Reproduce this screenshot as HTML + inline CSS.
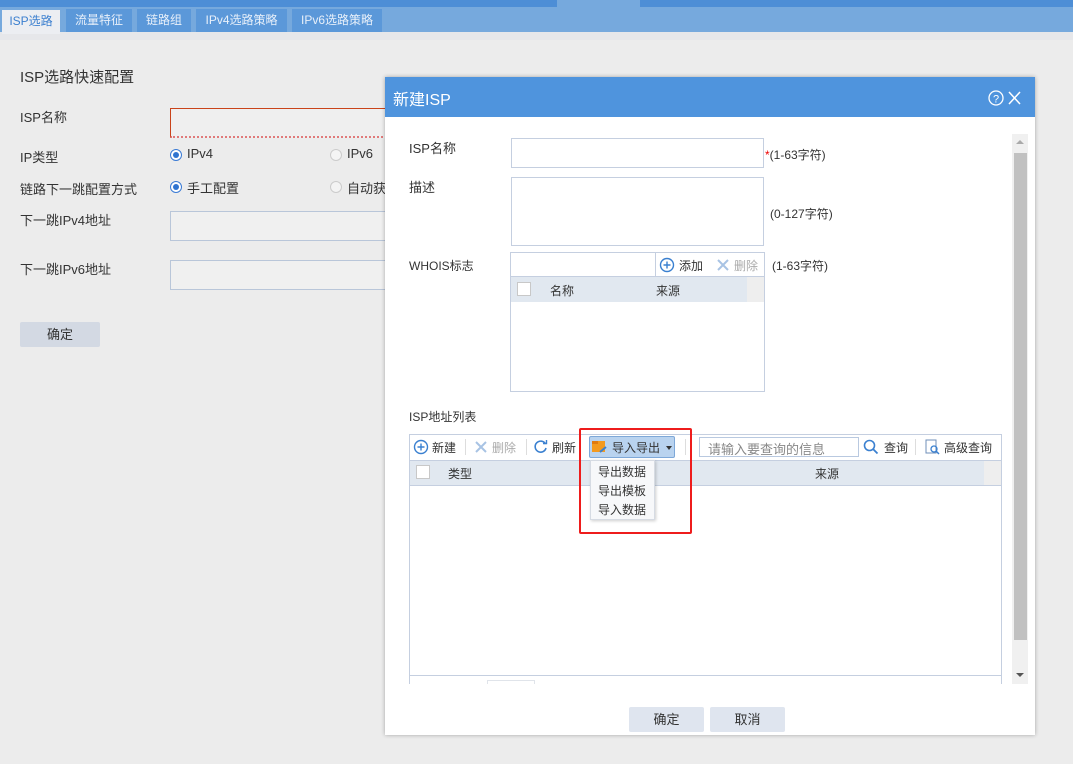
<!DOCTYPE html>
<html><head><meta charset="utf-8"><style>
*{margin:0;padding:0;box-sizing:border-box}
body{width:1073px;height:764px;overflow:hidden;background:#ececec;font-family:"Liberation Sans","Noto Sans CJK SC",sans-serif;font-size:13px;color:#333;position:relative}
.a{position:absolute}
.tab{position:absolute;top:9px;height:23px;line-height:22px;font-size:12px;color:#e8f0fa;text-align:center;background:#5b98d9}
.lbl{position:absolute;font-size:13px;color:#333}
.inp{position:absolute;border:1px solid #b9c6d9;background:#f0f0f0}
.radio{position:absolute;width:12px;height:12px;border-radius:50%;border:1px solid #ccc;background:#f4f4f4}
.radio.on{border:1px solid #3a7bd5;background:#fff}
.radio.on:after{content:"";position:absolute;left:2px;top:2px;width:6px;height:6px;border-radius:50%;background:#2f74d0}
.btn{position:absolute;background:#dfe5ef;border-radius:2px;text-align:center;font-size:13px;color:#333}
.cb{position:absolute;width:14px;height:14px;border:1px solid #c8c8c8;background:#fff}
</style></head><body>
<div class="a" style="left:0;top:0;width:1073px;height:7px;background:#4d8ed6"></div>
<div class="a" style="left:557px;top:0;width:83px;height:7px;background:#76a9dd"></div>
<div class="a" style="left:0;top:7px;width:1073px;height:25px;background:#76a9dd"></div>
<div class="a" style="left:0;top:32px;width:1073px;height:8px;background:#e6e7ea"></div>
<div class="tab" style="left:2px;width:58px;background:#eceef2;color:#3b7fcf;top:10px;height:24px">ISP选路</div>
<div class="tab" style="left:66px;width:66px">流量特征</div>
<div class="tab" style="left:137px;width:54px">链路组</div>
<div class="tab" style="left:196px;width:91px">IPv4选路策略</div>
<div class="tab" style="left:292px;width:90px">IPv6选路策略</div>

<div class="lbl" style="left:20px;top:66px;font-size:15px">ISP选路快速配置</div>
<div class="lbl" style="left:20px;top:107px">ISP名称</div>
<div class="a" style="left:170px;top:108px;width:220px;height:30px;border:1px solid #c9431a;border-bottom:2px dotted #e07a7a;background:#efefef"></div>
<div class="lbl" style="left:20px;top:147px">IP类型</div>
<div class="radio on" style="left:170px;top:149px"></div><div class="lbl" style="left:187px;top:146px">IPv4</div>
<div class="radio" style="left:330px;top:149px"></div><div class="lbl" style="left:347px;top:146px">IPv6</div>
<div class="lbl" style="left:20px;top:179px">链路下一跳配置方式</div>
<div class="radio on" style="left:170px;top:181px"></div><div class="lbl" style="left:187px;top:178px">手工配置</div>
<div class="radio" style="left:330px;top:181px"></div><div class="lbl" style="left:347px;top:178px">自动获</div>
<div class="lbl" style="left:20px;top:210px">下一跳IPv4地址</div>
<div class="inp" style="left:170px;top:211px;width:220px;height:30px"></div>
<div class="lbl" style="left:20px;top:259px">下一跳IPv6地址</div>
<div class="inp" style="left:170px;top:260px;width:220px;height:30px"></div>
<div class="btn" style="left:20px;top:322px;width:80px;height:25px;line-height:25px;background:#d3d9e3">确定</div>

<!-- dialog -->
<div class="a" style="left:385px;top:77px;width:650px;height:658px;background:#fff;box-shadow:0 0 4px rgba(0,0,0,.3)">
 <div class="a" style="left:0;top:0;width:650px;height:40px;background:#4f94dd"></div>
 <div class="a" style="left:8px;top:9px;color:#fff;font-size:16px">新建ISP</div>
 <svg class="a" style="left:603px;top:12px" width="40" height="18"><circle cx="8" cy="9" r="7" fill="none" stroke="#fff" stroke-width="1.3"/><text x="8" y="13.5" font-size="11" fill="#fff" text-anchor="middle" font-family="Liberation Sans">?</text><path d="M21 3L32 15M32 3L21 15" stroke="#fff" stroke-width="1.5"/></svg>

 <div class="lbl" style="left:24px;top:61px">ISP名称</div>
 <div class="a" style="left:126px;top:61px;width:253px;height:30px;border:1px solid #c5cfe0"></div>
 <div class="a" style="left:380px;top:69px;font-size:12px"><span style="color:#e00">*</span>(1-63字符)</div>
 <div class="lbl" style="left:24px;top:100px">描述</div>
 <div class="a" style="left:126px;top:100px;width:253px;height:69px;border:1px solid #c5cfe0"></div>
 <div class="a" style="left:385px;top:128px;font-size:12px">(0-127字符)</div>
 <div class="lbl" style="left:24px;top:180px;font-size:12px">WHOIS标志</div>
 <div class="a" style="left:125px;top:175px;width:255px;height:140px;border:1px solid #c5cfe0"></div>
 <div class="a" style="left:126px;top:176px;width:145px;height:23px;border-right:1px solid #c5cfe0"></div>
 <svg class="a" style="left:274px;top:180px" width="16" height="16"><circle cx="8" cy="8" r="6.5" fill="none" stroke="#3a80d0" stroke-width="1.4"/><path d="M8 4.5v7M4.5 8h7" stroke="#3a80d0" stroke-width="1.4"/></svg>
 <div class="a" style="left:294px;top:180px;font-size:12px">添加</div>
 <svg class="a" style="left:331px;top:181px" width="14" height="14"><path d="M2 2L12 12M12 2L2 12" stroke="#a8c3e4" stroke-width="2"/></svg>
 <div class="a" style="left:349px;top:180px;font-size:12px;color:#aaa">删除</div>
 <div class="a" style="left:387px;top:180px;font-size:12px">(1-63字符)</div>
 <div class="a" style="left:126px;top:199px;width:236px;height:26px;background:#e1e8f0;border-top:1px solid #c5cfe0"></div>
 <div class="a" style="left:362px;top:199px;width:17px;height:26px;background:#eee;border-top:1px solid #c5cfe0"></div>
 <div class="cb" style="left:132px;top:205px"></div>
 <div class="a" style="left:165px;top:205px;font-size:12px">名称</div>
 <div class="a" style="left:271px;top:205px;font-size:12px">来源</div>

 <div class="a" style="left:24px;top:331px;font-size:12px">ISP地址列表</div>
 <div class="a" style="left:24px;top:357px;width:593px;height:250px;border:1px solid #c5cfe0;border-bottom:none"></div>
 <div class="a" style="left:24px;top:598px;width:593px;height:1px;background:#c5cfe0"></div>
 <svg class="a" style="left:28px;top:362px" width="16" height="16"><circle cx="8" cy="8" r="6.5" fill="none" stroke="#3a80d0" stroke-width="1.4"/><path d="M8 4.5v7M4.5 8h7" stroke="#3a80d0" stroke-width="1.4"/></svg>
 <div class="a" style="left:47px;top:362px;font-size:12px">新建</div>
 <div class="a" style="left:80px;top:362px;width:1px;height:16px;background:#ddd"></div>
 <svg class="a" style="left:89px;top:363px" width="14" height="14"><path d="M2 2L12 12M12 2L2 12" stroke="#a8c3e4" stroke-width="2"/></svg>
 <div class="a" style="left:107px;top:362px;font-size:12px;color:#aaa">删除</div>
 <div class="a" style="left:141px;top:362px;width:1px;height:16px;background:#ddd"></div>
 <svg class="a" style="left:148px;top:362px" width="15" height="15"><path d="M12.5 5A5.5 5.5 0 1 0 13 9" fill="none" stroke="#3a80d0" stroke-width="1.6"/><path d="M10 4.5h3.5V1" fill="none" stroke="#3a80d0" stroke-width="1.4"/></svg>
 <div class="a" style="left:167px;top:362px;font-size:12px">刷新</div>
 <div class="a" style="left:204px;top:359px;width:86px;height:22px;background:#b9d3ef;border:1px solid #7ea8d8;border-radius:2px"></div>
 <svg class="a" style="left:206px;top:362px" width="18" height="16"><rect x="1" y="2" width="13" height="11" fill="#f39a1f"/><rect x="1" y="2" width="6" height="3" fill="#e07b10"/><path d="M9 13l6-5" stroke="#3a80d0" stroke-width="2"/></svg>
 <div class="a" style="left:227px;top:362px;font-size:12px">导入导出</div>
 <div class="a" style="left:281px;top:369px;width:0;height:0;border-left:3px solid transparent;border-right:3px solid transparent;border-top:4px solid #333"></div>
 <div class="a" style="left:300px;top:362px;width:1px;height:16px;background:#ddd"></div>
 <div class="a" style="left:314px;top:360px;width:160px;height:20px;border:1px solid #b9c9e0"></div>
 <div class="a" style="left:323px;top:362px;font-size:13px;color:#888">请输入要查询的信息</div>
 <svg class="a" style="left:478px;top:362px" width="16" height="16"><circle cx="6.5" cy="6.5" r="5" fill="none" stroke="#3a80d0" stroke-width="1.6"/><path d="M10 10l4.5 4.5" stroke="#3a80d0" stroke-width="1.8"/></svg>
 <div class="a" style="left:499px;top:362px;font-size:12px">查询</div>
 <div class="a" style="left:530px;top:362px;width:1px;height:16px;background:#ddd"></div>
 <svg class="a" style="left:539px;top:362px" width="16" height="16"><rect x="2" y="1" width="10" height="13" fill="#fff" stroke="#6f8fb8"/><circle cx="10" cy="10" r="3" fill="none" stroke="#3a80d0" stroke-width="1.3"/><path d="M12 12l3 3" stroke="#3a80d0" stroke-width="1.5"/></svg>
 <div class="a" style="left:559px;top:362px;font-size:12px">高级查询</div>
 <div class="a" style="left:25px;top:383px;width:574px;height:26px;background:#e1e8f0;border-top:1px solid #c5cfe0;border-bottom:1px solid #c5cfe0"></div>
 <div class="a" style="left:599px;top:383px;width:17px;height:26px;background:#eee;border-top:1px solid #c5cfe0;border-bottom:1px solid #c5cfe0"></div>
 <div class="cb" style="left:31px;top:388px"></div>
 <div class="a" style="left:63px;top:388px;font-size:12px">类型</div>
 <div class="a" style="left:430px;top:388px;font-size:12px">来源</div>
 <div class="a" style="left:205px;top:383px;width:65px;height:60px;background:#f7f8fa;border:1px solid #d6dbe3;box-shadow:1px 1px 3px rgba(0,0,0,.2)"></div>
 <div class="a" style="left:213px;top:386px;font-size:12px;line-height:19px">导出数据<br>导出模板<br>导入数据</div>
 <div class="a" style="left:194px;top:351px;width:113px;height:106px;border:2px solid #ee1c1c;border-radius:2px"></div>
 <div class="a" style="left:102px;top:603px;width:48px;height:4px;border:1px solid #e0e4ea;border-bottom:none"></div>

 <div class="a" style="left:627px;top:57px;width:16px;height:550px;background:#f0f0f0"></div>
 <div class="a" style="left:629px;top:76px;width:13px;height:487px;background:#c1c1c1"></div>
 <div class="a" style="left:631px;top:63px;border-left:4px solid transparent;border-right:4px solid transparent;border-bottom:4px solid #aaa"></div>
 <div class="a" style="left:631px;top:596px;border-left:4px solid transparent;border-right:4px solid transparent;border-top:4px solid #555"></div>

 <div class="btn" style="left:244px;top:630px;width:75px;height:25px;line-height:25px">确定</div>
 <div class="btn" style="left:325px;top:630px;width:75px;height:25px;line-height:25px">取消</div>
</div>
</body></html>
